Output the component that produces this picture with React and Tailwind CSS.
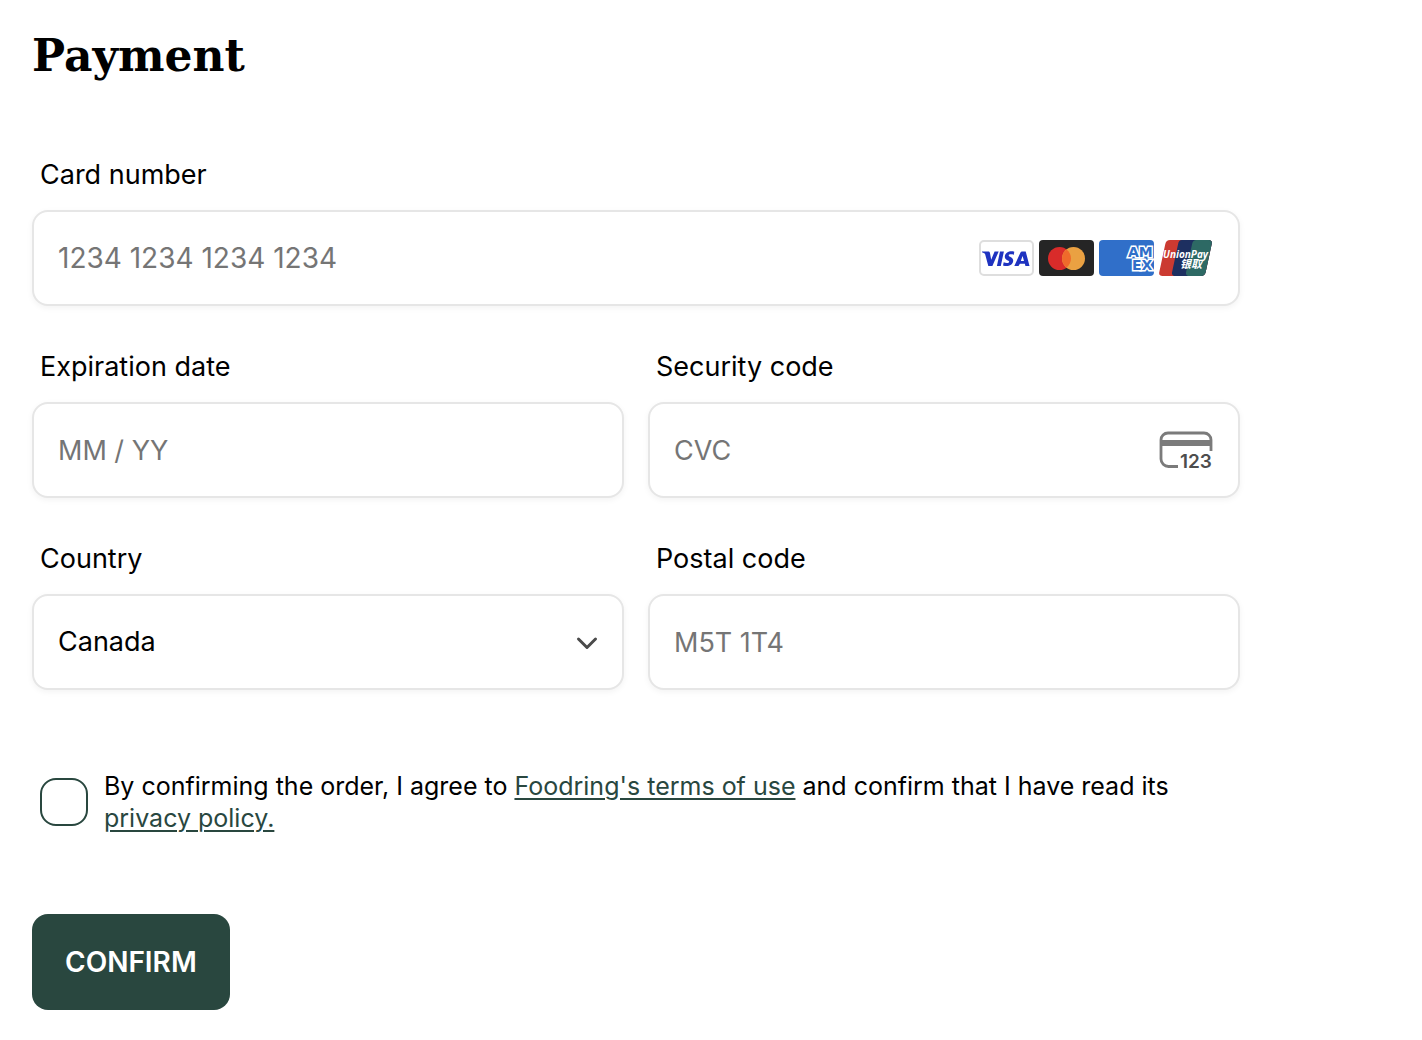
import React from "react";

const FIELD =
  "h-24 w-full rounded-2xl border-2 border-[#e6e6e6] bg-white px-6 text-black shadow-[0_2px_6px_rgba(0,0,0,0.05)] outline-none placeholder:text-[#757575] focus:border-[#29473f]";

function Field({ id, label, className = "", children }) {
  return (
    <div className={`flex flex-col gap-[19px] ${className}`}>
      <label htmlFor={id} className="px-2 text-[27px] leading-8">
        {label}
      </label>
      <div className="relative">{children}</div>
    </div>
  );
}

function Visa() {
  return (
    <svg width="55" height="36" viewBox="0 0 55 36" role="img" aria-label="Visa">
      <rect x="1" y="1" width="53" height="34" rx="4" fill="#fff" stroke="#dedede" strokeWidth="2" />
      <g fill="#1f33c0">
        <path d="M3 11.4h6.2c.9 0 1.5.4 1.7 1.3l1.3 7 3.4-8.3h4.1L13.4 26H9.3L6.2 14.4c-.2-.7-.4-.9-1-1.200C4.500 12.800 3.800 12.500 3 12.200Z" />
        <path d="M21 11.400h3.900L21.800 26h-3.900Z" />
        <path d="M35.300 11.700l-.6 3.200c-1.300-.6-4.900-1.100-5 .5 0 1.400 4.700 1.700 4.500 5.400-.2 4.400-5.500 6.400-10.200 4.700l.7-3.300c2.100 1.100 5.400 1.200 5.500-.5.100-1.600-4.600-1.600-4.400-5.300.3-4.400 5.600-6.100 9.500-4.700Z" />
        <path fillRule="evenodd" d="M43 11.400h3.700L50.500 26h-4.100l-.5-2.200h-5L39.500 26h-4.200l6.200-13.600c.3-.7.800-1 1.500-1Zm.6 4.500L41.800 21h3.200Z" />
      </g>
    </svg>
  );
}

function Mastercard() {
  return (
    <svg width="55" height="36" viewBox="0 0 55 36" role="img" aria-label="Mastercard">
      <rect width="55" height="36" rx="4" fill="#252525" />
      <circle cx="20.500" cy="18.500" r="11.500" fill="#d92b2a" />
      <circle cx="34.500" cy="18.500" r="11.500" fill="#eaa142" />
      <path d="M27.500 9.400a11.500 11.500 0 0 1 0 18.200a11.500 11.500 0 0 1 0-18.200Z" fill="#ef6a2b" />
    </svg>
  );
}

function Amex() {
  return (
    <svg width="55" height="36" viewBox="0 0 55 36" role="img" aria-label="American Express">
      <defs>
        <clipPath id="amex-card">
          <rect width="55" height="36" rx="4" />
        </clipPath>
      </defs>
      <g clipPath="url(#amex-card)">
        <rect width="55" height="36" fill="#306fc9" />
        <g
          fill="#306fc9"
          stroke="#fff"
          strokeWidth="3"
          paintOrder="stroke"
          fontFamily="DejaVu Sans, sans-serif"
          fontWeight="700"
          fontSize="14"
        >
          <text x="29" y="17">AM</text>
          <text x="33" y="30">EX</text>
        </g>
      </g>
    </svg>
  );
}

function UnionPay() {
  return (
    <svg width="53" height="36" viewBox="0 0 53 36" role="img" aria-label="UnionPay">
      <defs>
        <clipPath id="unionpay-card">
          <path d="M11 0h38.500c2.600 0 3.800 1.400 3.200 4l-6 28c-.6 2.700-2.200 4-4.700 4H3.500C.900 36-.300 34.600.300 32l6-28C6.900 1.300 8.500 0 11 0Z" />
        </clipPath>
      </defs>
      <g clipPath="url(#unionpay-card)">
        <rect width="53" height="36" fill="#cb3a31" />
        <path d="M23 0h30v36H16.500c-2.700 0-4-1.400-3.400-4l6-28c.5-2.700 1.500-4 3.900-4Z" fill="#1d2f60" />
        <path d="M37.500 0H53v36H30.500c-2.700 0-4-1.400-3.400-4l6-28c.5-2.700 2-4 4.400-4Z" fill="#2d6964" />
      </g>
      <g fill="#fff" fontStyle="italic" fontWeight="700">
        <text x="4" y="18" fontSize="10" fontFamily="Open Sans, sans-serif">UnionPay</text>
        <text x="21" y="28" fontSize="11" fontFamily="Noto Sans CJK SC, sans-serif">银取</text>
      </g>
    </svg>
  );
}

function CvcIcon() {
  return (
    <svg width="54" height="42" viewBox="0 0 54 42" aria-hidden="true">
      <path
        d="M19 37.500H9.500A7.500 7.500 0 0 1 2 30V11A7 7 0 0 1 9 4H45a7 7 0 0 1 7 7v11"
        fill="none"
        stroke="#7b7b7b"
        strokeWidth="2.800"
      />
      <rect x="2" y="11" width="50" height="6" fill="#7b7b7b" />
      <text x="21" y="39" fill="#4d4d4d" fontSize="19" fontWeight="600" fontFamily="Inter, sans-serif">
        123
      </text>
    </svg>
  );
}

export default function App() {
  return (
    <main className="px-8 pt-[30px] pb-[30px] font-['Inter',sans-serif] text-black">
      <form className="w-full max-w-[1208px]" onSubmit={(e) => e.preventDefault()}>
        <h1 className="font-['DejaVu_Serif',serif] text-[44px] leading-[52px] font-bold">Payment</h1>

        <div className="mt-[77px] grid grid-cols-2 gap-x-6 gap-y-[45px]">
          <Field id="card" label="Card number" className="col-span-2">
            <input id="card" className={`${FIELD} text-[28px]`} placeholder="1234 1234 1234 1234" inputMode="numeric" />
            <div className="pointer-events-none absolute inset-y-0 right-7 flex items-center gap-[5px]">
              <Visa />
              <Mastercard />
              <Amex />
              <UnionPay />
            </div>
          </Field>

          <Field id="expiry" label="Expiration date">
            <input id="expiry" className={`${FIELD} text-[27px]`} placeholder="MM / YY" inputMode="numeric" />
          </Field>

          <Field id="cvc" label="Security code">
            <input id="cvc" className={`${FIELD} text-[27px]`} placeholder="CVC" inputMode="numeric" />
            <div className="pointer-events-none absolute inset-y-0 right-[27px] flex items-center">
              <CvcIcon />
            </div>
          </Field>

          <Field id="country" label="Country">
            <select id="country" className={`${FIELD} appearance-none text-[27px]`} defaultValue="Canada">
              <option>Canada</option>
            </select>
            <div className="pointer-events-none absolute inset-y-0 right-[25px] flex items-center">
              <svg width="24" height="24" viewBox="0 0 24 24" fill="none" aria-hidden="true">
                <path d="M3.500 9 12 17.500l8.500-8.500" stroke="#4a4a4a" strokeWidth="3" strokeLinecap="round" strokeLinejoin="round" />
              </svg>
            </div>
          </Field>

          <Field id="postal" label="Postal code">
            <input id="postal" className={`${FIELD} text-[27px]`} placeholder="M5T 1T4" />
          </Field>
        </div>

        <div className="mt-20 flex items-center gap-4 pl-2">
          <input
            id="agree"
            type="checkbox"
            className="size-12 shrink-0 appearance-none rounded-2xl border-2 border-[#29473f] bg-white checked:bg-[#29473f]"
          />
          <label htmlFor="agree" className="text-[25px] leading-8">
            By confirming the order, I agree to{" "}
            <a href="#terms" className="text-[#29473f] underline decoration-2 underline-offset-3">Foodring's terms of use</a>{" "}
            and confirm that I have read its{" "}
            <a href="#privacy" className="text-[#29473f] underline decoration-2 underline-offset-3">privacy policy.</a>
          </label>
        </div>

        <button
          type="submit"
          className="mt-20 h-24 rounded-2xl bg-[#29473f] px-[33px] text-[28px] font-semibold text-white"
        >
          CONFIRM
        </button>
      </form>
    </main>
  );
}
